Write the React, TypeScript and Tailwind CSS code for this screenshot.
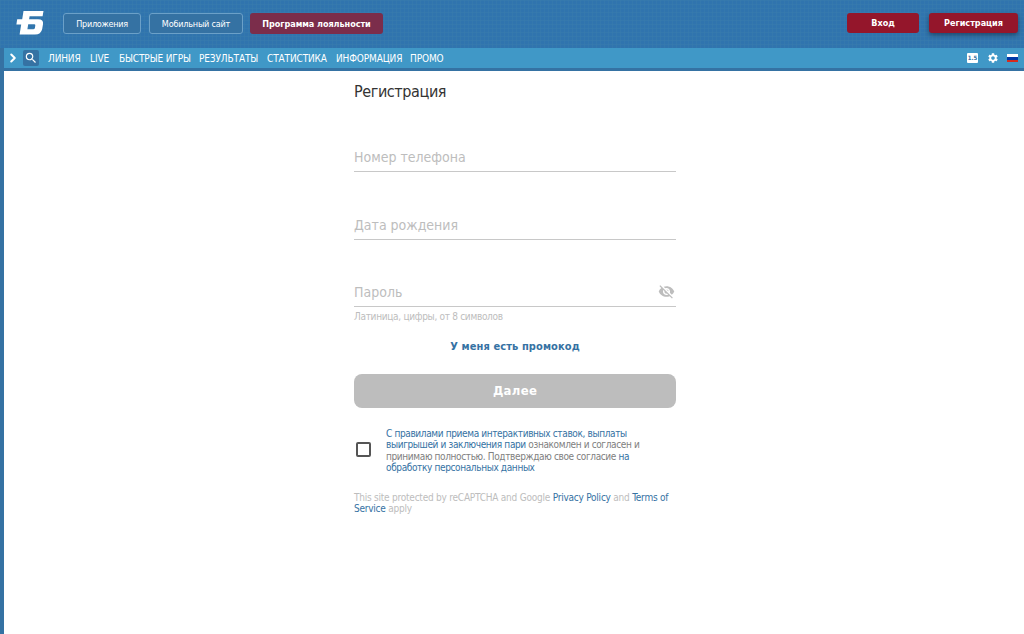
import React from 'react';
import { ChevronRight } from 'lucide-react';
import { MdSearch, MdSettings, MdVisibilityOff } from 'react-icons/md';

interface NavItem {
  label: string;
  width: string;
}

interface FieldProps {
  label: string;
  icon?: React.ReactNode;
}

const NAV_ITEMS: NavItem[] = [
  { label: 'ЛИНИЯ', width: 'w-[42px]' },
  { label: 'LIVE', width: 'w-[29px]' },
  { label: 'БЫСТРЫЕ ИГРЫ', width: 'w-20' },
  { label: 'РЕЗУЛЬТАТЫ', width: 'w-[68px]' },
  { label: 'СТАТИСТИКА', width: 'w-[69px]' },
  { label: 'ИНФОРМАЦИЯ', width: 'w-[74px]' },
  { label: 'ПРОМО', width: 'w-[42px]' },
];

function Logo() {
  return (
    <svg width="28" height="24" viewBox="0 0 28 24" className="shrink-0" fill="#fff">
      <path
        fillRule="evenodd"
        d="M7.5 0H27.5L26.6 5.2H13.6L13.1 8.2H22Q27.8 8.2 27 13.2L26.2 18Q25 23.5 19 23.5H3.6L5.2 13.6H0.4L1.2 8.2H6.2ZM12.2 13.2L11.4 18.2H17.2Q18.6 18.2 18.9 17L19.3 14.5Q19.5 13.2 18.2 13.2Z"
      />
    </svg>
  );
}

function Flag() {
  return (
    <span className="flex h-2 w-[11px] flex-col">
      <span className="h-[3px] bg-white" />
      <span className="h-[3px] bg-[#0039a6]" />
      <span className="h-[2px] bg-[#d52b1e]" />
    </span>
  );
}

function Header() {
  return (
    <header className="flex h-12 items-start bg-[#3074ae] bg-[linear-gradient(#3b7dad66_1px,transparent_1px),linear-gradient(90deg,#3b7dad66_1px,transparent_1px)] bg-[size:4px_4px] pl-4 pr-1.5 text-white">
      <div className="mt-[11px]">
        <Logo />
      </div>
      <div className="ml-[19px] mt-[13px] flex gap-2 text-[9px]">
        <button className="h-[21px] w-[78px] rounded-[3px] border border-[#6ba0c8] bg-[#3572a3] pt-0.5 tracking-[-0.28px] whitespace-nowrap">
          Приложения
        </button>
        <button className="h-[21px] w-[94px] rounded-[3px] border border-[#6ba0c8] bg-[#3572a3] pt-0.5 tracking-[-0.2px] whitespace-nowrap">
          Мобильный сайт
        </button>
        <button className="-ml-px h-[21px] w-[133px] rounded-[3px] bg-[#7b2d4b] pt-0.5 font-bold tracking-[-0.04px] whitespace-nowrap">
          Программа лояльности
        </button>
      </div>
      <div className="ml-auto mt-[13px] flex gap-2.5 text-[9px] font-bold">
        <button className="h-5 w-[72px] rounded-[3px] bg-[#94162b] pt-0.5">Вход</button>
        <button className="h-5 w-[89px] rounded-[3px] bg-[#94162b] pt-0.5 shadow-[0_2px_5px_#00000066]">
          Регистрация
        </button>
      </div>
    </header>
  );
}

function NavBar() {
  return (
    <nav className="flex h-5 items-center bg-[#4098c7] text-[10px] text-white">
      <ChevronRight size={14} strokeWidth={3.5} className="ml-[2px]" />
      <span className="ml-[3px] flex size-4 items-center justify-center rounded-[2px] bg-[#3572a3]">
        <MdSearch size={14} />
      </span>
      <div className="ml-[9px] flex tracking-[-0.13px]">
        {NAV_ITEMS.map((item) => (
          <a key={item.label} className={`${item.width} whitespace-nowrap`}>
            {item.label}
          </a>
        ))}
      </div>
      <div className="ml-auto flex items-center pr-1.5">
        <span className="flex h-2.5 w-[11px] items-center justify-center rounded-[1px] bg-white text-[6px] font-bold leading-none text-[#3572a3]">
          1.5
        </span>
        <MdSettings size={12} className="ml-[9px]" />
        <span className="ml-2">
          <Flag />
        </span>
      </div>
    </nav>
  );
}

function Field({ label, icon }: FieldProps) {
  return (
    <div className="flex h-[29px] items-start justify-between border-b border-[#c8c8c8] text-[#bdbdbd]">
      <span className="text-[14px] leading-[28px]">{label}</span>
      {icon}
    </div>
  );
}

function RegistrationForm() {
  return (
    <main className="ml-[350px] w-[322px] pt-[11px]">
      <h1 className="text-[16px] leading-5 tracking-[-0.4px] text-[#333]">Регистрация</h1>
      <div className="mt-[41px] flex flex-col gap-[38.6px]">
        <Field label="Номер телефона" />
        <Field label="Дата рождения" />
        <Field label="Пароль" icon={<MdVisibilityOff size={17} className="mr-px mt-[5px]" />} />
      </div>
      <p className="mt-[3.8px] text-[10px] leading-3 tracking-[-0.3px] text-[#bdbdbd]">
        Латиница, цифры, от 8 символов
      </p>
      <a className="mt-4 block text-center text-[11px] font-bold leading-4 tracking-[0.1px] text-[#3572a3]">
        У меня есть промокод
      </a>
      <button className="mt-[19px] block h-[34px] w-full rounded-lg bg-[#bdbdbd] text-[13px] font-bold tracking-[0.3px] text-white">
        Далее
      </button>
      <div className="mt-5 flex items-center">
        <span className="-mt-0.5 ml-[2px] size-[15px] shrink-0 rounded-[2px] border-2 border-[#555]" />
        <p className="ml-[15px] text-[10px] leading-[11.3px] tracking-[-0.37px] whitespace-nowrap text-[#808080]">
          <a className="text-[#3572a3]">С правилами приема интерактивных ставок, выплаты</a>
          <br />
          <a className="text-[#3572a3]">выигрышей и заключения пари</a> ознакомлен и согласен и
          <br />
          принимаю полностью. Подтверждаю свое согласие <a className="text-[#3572a3]">на</a>
          <br />
          <a className="text-[#3572a3]">обработку персональных данных</a>
        </p>
      </div>
      <p className="mt-[19px] text-[10px] leading-[11.3px] tracking-[-0.23px] whitespace-nowrap text-[#bdbdbd]">
        This site protected by reCAPTCHA and Google <a className="text-[#3572a3]">Privacy Policy</a> and{' '}
        <a className="text-[#3572a3]">Terms of</a>
        <br />
        <a className="text-[#3572a3]">Service</a> apply
      </p>
    </main>
  );
}

export default function App() {
  return (
    <div className="h-[634px] w-[1024px] overflow-hidden bg-white font-['DejaVu_Sans_Condensed','DejaVu_Sans',sans-serif]">
      <Header />
      <div className="h-[586px] border-l-4 border-[#3572a3]">
        <NavBar />
        <div className="h-[3px] bg-[#3572a3]" />
        <RegistrationForm />
      </div>
    </div>
  );
}
